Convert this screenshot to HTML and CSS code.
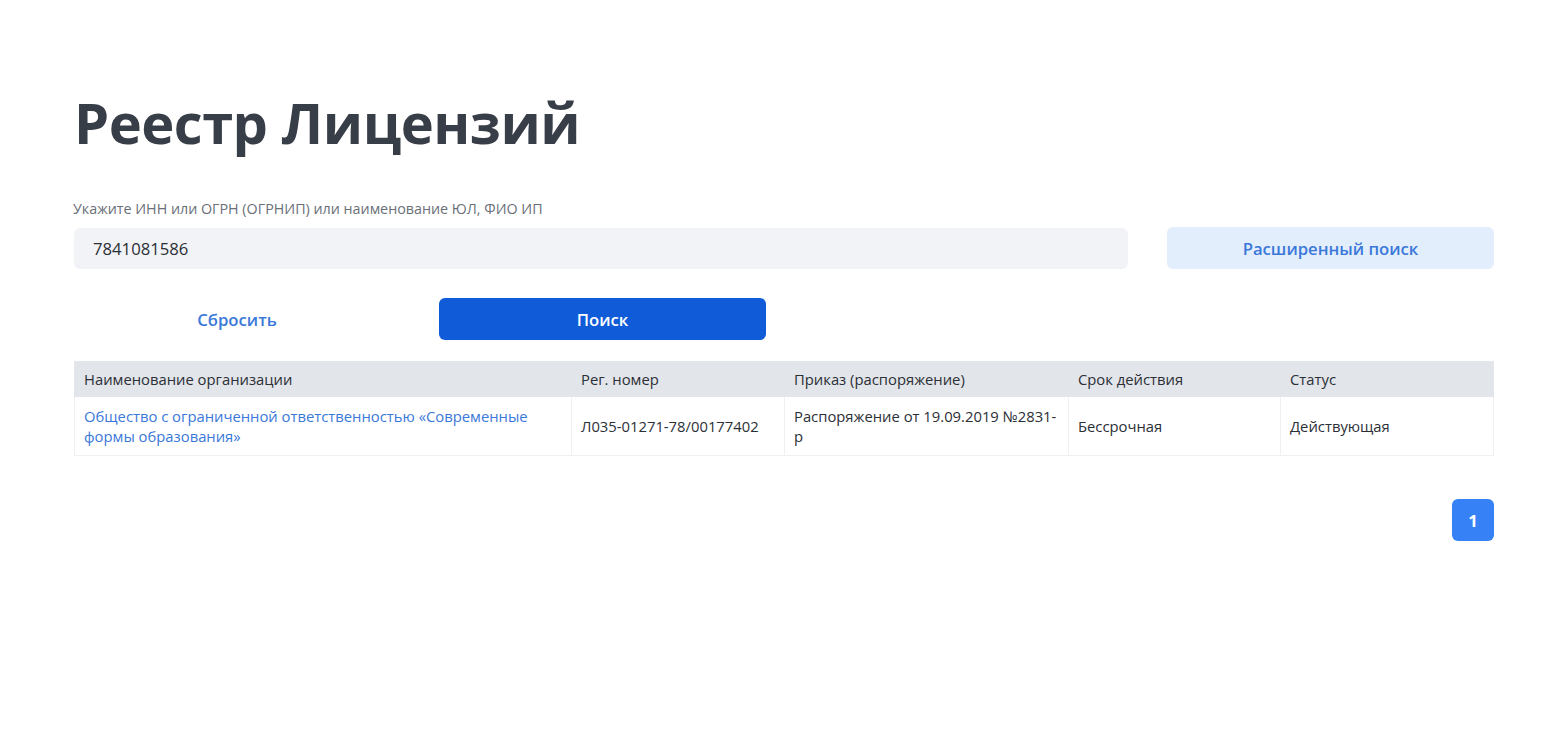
FILE: index.html
```html
<!DOCTYPE html>
<html lang="ru">
<head>
<meta charset="utf-8">
<title>Реестр Лицензий</title>
<link rel="stylesheet" href="styles.css">
</head>
<body>
<main class="page">
  <h1 class="title">Реестр Лицензий</h1>
  <div class="search">
    <label class="label" for="q">Укажите ИНН или ОГРН (ОГРНИП) или наименование ЮЛ, ФИО ИП</label>
    <div class="search-row">
      <input id="q" class="input" type="text" value="7841081586">
      <button class="btn btn-light">Расширенный поиск</button>
    </div>
    <div class="actions">
      <button class="btn btn-text">Сбросить</button>
      <button class="btn btn-primary">Поиск</button>
    </div>
  </div>
  <table class="table">
    <colgroup>
      <col class="c1"><col class="c2"><col class="c3"><col class="c4"><col class="c5">
    </colgroup>
    <thead>
      <tr>
        <th>Наименование организации</th>
        <th>Рег. номер</th>
        <th>Приказ (распоряжение)</th>
        <th>Срок действия</th>
        <th>Статус</th>
      </tr>
    </thead>
    <tbody>
      <tr>
        <td><a class="link" href="#">Общество с ограниченной ответственностью «Современные формы образования»</a></td>
        <td>Л035-01271-78/00177402</td>
        <td>Распоряжение от 19.09.2019 №2831-р</td>
        <td>Бессрочная</td>
        <td>Действующая</td>
      </tr>
    </tbody>
  </table>
  <div class="pager">
    <button class="page-btn">1</button>
  </div>
</main>
</body>
</html>
```

FILE: styles.css
```css
* { box-sizing: border-box; }
html, body { margin: 0; padding: 0; background: #fff; }
body {
  font-family: "Open Sans", "Noto Sans", sans-serif;
  color: #2b2f36;
}
.page {
  padding: 80px 74px 0 74px;
}
.title {
  margin: 0;
  font-size: 56px;
  line-height: 84px;
  font-weight: 700;
  letter-spacing: -0.5px;
  color: #383e48;
}
.search {
  margin-top: 35px;
}
.label {
  display: block;
  font-size: 14.3px;
  line-height: 20px;
  color: #6a6f78;
  margin-left: -1px;
}
.search-row {
  display: flex;
  gap: 39px;
  margin-top: 8px;
  align-items: flex-start;
}
.input {
  flex: 1;
  height: 41px;
  border: none;
  border-radius: 6px;
  background: #f2f3f6;
  font-family: inherit;
  font-size: 16.7px;
  color: #2b2f36;
  padding: 0 19px;
  margin-top: 1px;
  outline: none;
}
.btn {
  font-family: inherit;
  border: none;
  cursor: pointer;
  font-size: 16.7px;
  font-weight: 600;
  height: 42px;
  border-radius: 6px;
}
.btn-light {
  width: 327px;
  background: #e3eefc;
  color: #3a78d9;
}
.actions {
  display: flex;
  gap: 39px;
  margin-top: 29px;
}
.btn-text {
  width: 326px;
  background: transparent;
  color: #3a78d9;
}
.btn-primary {
  width: 327px;
  background: #0f5bd8;
  color: #fff;
}
.table {
  width: 100%;
  margin-top: 21px;
  border-collapse: collapse;
  table-layout: fixed;
  font-size: 14.8px;
  line-height: 20px;
}
.c1 { width: 497px; }
.c2 { width: 213px; }
.c3 { width: 284px; }
.c4 { width: 212px; }
.c5 { width: auto; }
.table th {
  background: #e2e5ea;
  font-weight: 400;
  text-align: left;
  height: 35px;
  padding: 0 9px;
  color: #2b2f36;
  border: 1px solid #e2e5ea;
  border-left: 1px solid #f4f5f7;
}
.table th:first-child { border-left-color: #e2e5ea; }
.table td {
  padding: 9px 9px 9px 9px;
  vertical-align: middle;
  border: 1px solid #eef0f3;
  color: #2b2f36;
}
.link {
  color: #3a78d9;
  text-decoration: none;
}
.pager {
  display: flex;
  justify-content: flex-end;
  margin-top: 43px;
}
.page-btn {
  width: 42px;
  height: 42px;
  border: none;
  border-radius: 6px;
  background: #3681f5;
  color: #fff;
  font-family: inherit;
  font-size: 16.7px;
  font-weight: 700;
}
```
